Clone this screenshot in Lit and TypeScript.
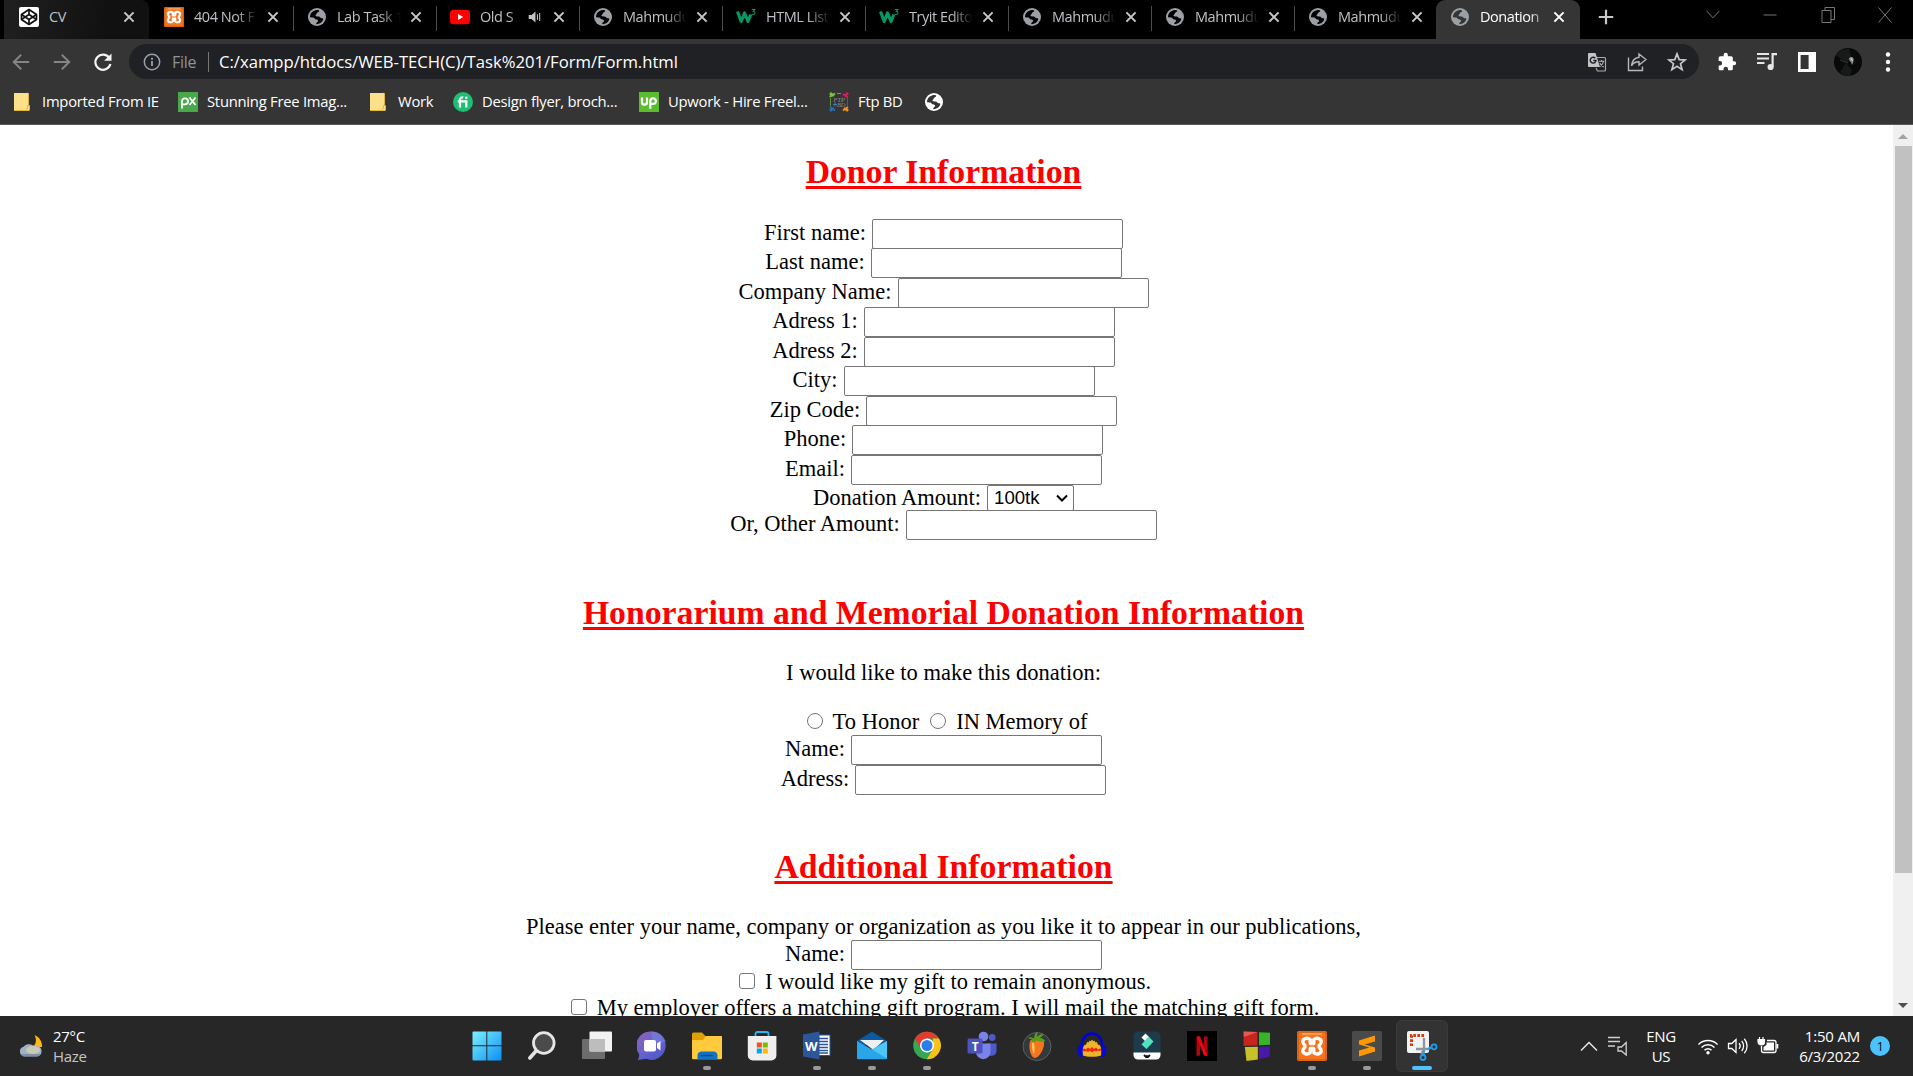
import { LitElement, html, svg, css } from "lit";
import { customElement, property } from "lit/decorators.js";

const globe = (c: string, bg: string) => svg`
  <circle cx="10" cy="10" r="9" fill=${c}/>
  <path d="M3 10.2C3 7 5 4 8.6 3.2c1.600-.4 3.400-.2 3.600.6.2 1-.8 1.200-1.700 1.700-.9.500-.6 1.500-1.400 2.100-.7.600-1 1.400.2 1.700 1.500.3 3.100-.1 3.900 1.100.9 1.300 2.300.4 2.900 1.200.7 1-1 3.400-2.600 4.400-1.300.9-3 1.300-4.300 1.100 0-1.300.9-2 1.700-2.700.7-.8-.2-1.700-1.300-1.900C7.500 12.200 7.600 10.500 6 10.400z" fill=${bg}/>`;

const xampp = svg`
  <rect width="30" height="30" rx="2" fill="#f4731c"/>
  <rect x="1" y="1" width="28" height="28" rx="2" fill="none" stroke="#c95a10" stroke-width="1.200"/>
  <rect x="5" y="2" width="20" height="1.800" rx=".9" fill="#fba766"/>
  <path d="M13.200 8.500C10 5.800 5 8 6 11.500c.4 1.800 2 2.200 2 3.700s-1.600 2-2 3.700c-1 3.500 4 5.500 7.200 2.800v-4.200h3.600v4.200c3.200 2.700 8.200.7 7.200-2.800-.4-1.700-2-2.200-2-3.700s1.600-1.900 2-3.700c1-3.500-4-5.700-7.200-3v4.200h-3.600z" fill="none" stroke="#fff" stroke-width="3.300" stroke-linejoin="round"/>`;

const icons: Record<string, [string, unknown]> = {
  globe: ["0 0 20 20", globe("#9aa0a6", "#000")],
  globeActive: ["0 0 20 20", globe("#9aa0a6", "#353535")],
  globeWhite: ["0 0 20 20", globe("#fff", "#353535")],
  xampp: ["0 0 30 30", xampp],
  codepen: ["0 0 20 20", svg`
    <rect width="20" height="20" rx="2" fill="#fff"/>
    <g fill="none" stroke="#111" stroke-width="1.700" stroke-linejoin="round">
      <path d="M10 2.500l7.500 5v5L10 17.500l-7.500-5v-5z"/>
      <path d="M2.500 7.500L10 12.500l7.500-5M2.500 12.500L10 7.500l7.500 5M10 2.500v5M10 12.500v5"/>
    </g>`],
  youtube: ["0 0 20 20", svg`<rect y="2.800" width="20" height="14.400" rx="3.500" fill="#f00"/><path d="M8 7l5.200 3L8 13z" fill="#fff"/>`],
  w3: ["0 0 20 20", svg`
    <path d="M1.500 4.500l3.700 10 3.300-8.500 3.500 8.500 2.800-7" fill="none" stroke="#059862" stroke-width="3.200" stroke-linejoin="round"/>
    <path d="M15.800 2.500h3L17.300 4.500c2.200 0 2.200 3-.2 3-.7 0-1.200-.3-1.500-.8" fill="none" stroke="#059862" stroke-width="1.100"/>`],
  close: ["0 0 20 20", svg`<path d="M5.400 5.400l9.200 9.200M14.600 5.400l-9.200 9.200" stroke="currentColor" stroke-width="2" fill="none"/>`],
  audio: ["0 0 20 20", svg`<path d="M3 7.800h3.200L10.500 4v12l-4.300-3.800H3z" fill="#c4c4c4"/><path d="M12.700 7v6M15.200 5.500v9" stroke="#c4c4c4" stroke-width="1.200"/>`],
  plus: ["0 0 20 20", svg`<path d="M10 2.800v14.400M2.800 10h14.400" stroke="#c8c8c8" stroke-width="2.200"/>`],
  down: ["0 0 20 20", svg`<path d="M3.500 5.800L10 12.800l6.500-7" stroke="#777" fill="none"/>`],
  min: ["0 0 20 20", svg`<path d="M3.500 10h13" stroke="#777"/>`],
  restore: ["0 0 20 20", svg`<path d="M4 5.500h9v12H4zM7 5.500V2.500h9.500V14.500H13" stroke="#777" fill="none"/>`],
  x: ["0 0 20 20", svg`<path d="M3.500 2.500l13 15M16.500 2.500l-13 15" stroke="#777" fill="none"/>`],
  back: ["0 0 20 20", svg`<path d="M18.200 10H3M10.200 2.700L2.700 10l7.500 7.300" stroke="#858585" stroke-width="1.900" fill="none"/>`],
  forward: ["0 0 20 20", svg`<path d="M1.800 10H17M9.800 2.700L17.300 10l-7.500 7.300" stroke="#858585" stroke-width="1.900" fill="none"/>`],
  reload: ["0 0 20 20", svg`<path d="M16.200 5.800A7.600 7.600 0 1 0 17.400 12" stroke="#f4f4f4" stroke-width="2.200" fill="none"/><path d="M18.500 1.500v7.300h-7.300z" fill="#f4f4f4"/>`],
  info: ["0 0 20 20", svg`<circle cx="10" cy="10" r="7.700" fill="none" stroke="#9aa0a6" stroke-width="1.500"/><path d="M10 9v5M10 5.800v1.900" stroke="#9aa0a6" stroke-width="1.800"/>`],
  translate: ["0 0 20 20", svg`
    <path d="M9 5.500h8.500a1 1 0 0 1 1 1V18a1 1 0 0 1-1 1h-7L9 16" fill="none" stroke="#a9a9a9" stroke-width="1.200"/>
    <path d="M2 1h6.500l4.500 14H2a1 1 0 0 1-1-1V2a1 1 0 0 1 1-1z" fill="#c4c4c4"/>
    <path d="M8.300 6.300A2.900 2.900 0 1 0 9 8.500H6.300" fill="none" stroke="#202124" stroke-width="1.400"/>
    <path d="M11.800 9.300h5.500M14.500 8v1.300M16.500 9.500c-.5 2.500-2 4-3.500 5M12.800 11c1 2 2.200 3.200 4 4" fill="none" stroke="#b5b5b5" stroke-width="1.100"/>`],
  share: ["0 0 20 20", svg`<path d="M1.500 5.500v13h14v-4M12 2l7 5.500-7 5.500V9.800c-3.500 0-6 1.200-7.500 4C5 9 7.500 6 12 5.300z" fill="none" stroke="#b8b8b8" stroke-width="1.400"/>`],
  star: ["0 0 20 20", svg`<path d="M10 1.800l2.200 5.800 6 .3-4.700 3.800 1.600 5.900L10 14.300l-5.100 3.300 1.600-5.900L1.800 7.900l6-.3z" fill="none" stroke="#c8c8c8" stroke-width="1.700"/>`],
  puzzle: ["0 0 24 24", svg`<path d="M20.500 11H19V7c0-1.100-.9-2-2-2h-4V3.500a2.500 2.500 0 0 0-5 0V5H4c-1.100 0-2 .9-2 2v3.800h1.500a2.700 2.700 0 0 1 0 5.400H2V20c0 1.100.9 2 2 2h3.800v-1.500a2.700 2.700 0 0 1 5.400 0V22H17c1.100 0 2-.9 2-2v-4h1.500a2.500 2.500 0 0 0 0-5z" fill="#fff"/>`],
  media: ["0 0 20 20", svg`<path d="M0 2h12M0 6.500h12M0 11h7.500" stroke="#e6e6e6" stroke-width="2"/><path d="M15.600 14.500V2.200H20" stroke="#e6e6e6" stroke-width="2.200" fill="none"/><circle cx="13.600" cy="15" r="3.100" fill="#e6e6e6"/>`],
  panel: ["0 0 20 20", svg`<path d="M1 0h18v20H1zM3.600 3v14h8V3z" fill="#fff" fill-rule="evenodd"/>`],
  dots: ["0 0 20 20", svg`<circle cx="10" cy="2.500" r="2.200" fill="#fff"/><circle cx="10" cy="10" r="2.200" fill="#fff"/><circle cx="10" cy="17.500" r="2.200" fill="#fff"/>`],
  avatar: ["0 0 28 28", svg`<circle cx="14" cy="14" r="14" fill="#080909"/><path d="M2 7l10 8 6-4-3-10A14 14 0 0 0 2 7zM12 15l-6 9a14 14 0 0 0 10 4l2-6z" fill="#171a19"/><path d="M6 12l8 3" stroke="#333" /><path d="M15 10.500c1-2 4-2 4.500 0s-.5 4.500-1.500 6.500l-1-3c-1-.5-2-2-2-3.500z" fill="#8d8d8d"/><path d="M17 10.500l1.500 2" stroke="#eee"/>`],
  folder: ["0 0 20 20", svg`<path d="M1 1h13.500a1 1 0 0 1 1 1v10.500l1 1V18a1 1 0 0 1-1 1H1z" fill="#ffe08a"/><path d="M15.500 12.500V2a1 1 0 0 0-1-1M1 18.500h14.500a1 1 0 0 0 1-1v-4h-2v2.500l-1 1.500" fill="none" stroke="#e2b93f" stroke-width="1"/>`],
  px: ["0 0 20 20", svg`<rect width="20" height="20" fill="#4aa84a"/><path d="M4 16.500V9a3 3 0 1 1 3 3.300H5M11.500 5.500l6 7.500M17.500 5.500l-6 7.500" stroke="#fff" stroke-width="1.800" fill="none"/>`],
  fiverr: ["0 0 20 20", svg`<circle cx="10" cy="10" r="10" fill="#1dbf73"/><path d="M7 15.500V7.800c0-1.800 1.200-2.500 3.200-2.300M4.800 9.300h8.500v6.200" stroke="#fff" stroke-width="2.200" fill="none"/><circle cx="13.300" cy="5.800" r="1.300" fill="#fff"/>`],
  upwork: ["0 0 20 20", svg`<rect width="20" height="20" fill="#5bbc2f"/><path d="M3 5.500v4.700c0 3.300 5 3.300 5 0V5.500M11.300 16.800V8.700a2.800 2.800 0 1 1 2.800 3.200h-2" stroke="#fff" stroke-width="2.200" fill="none"/>`],
  ftp: ["0 0 20 20", svg`
    <path d="M1 5c1-2 3-2 5-3.500M1 1.500L5 4" stroke="#7cc242" stroke-width="2" fill="none"/><circle cx="2" cy="1.800" r="1.500" fill="#7cc242"/>
    <path d="M14 2l5 3.500M15 4l4-2.500" stroke="#d81b60" stroke-width="2"/><circle cx="18" cy="1.800" r="1.500" fill="#d81b60"/>
    <path d="M1 15l5 3.500M5 16l-4 2.500" stroke="#1e73be" stroke-width="2"/><circle cx="2" cy="18" r="1.500" fill="#1e73be"/>
    <path d="M19 15l-5 3.500M15 16l4 2.500" stroke="#f7941d" stroke-width="2"/><circle cx="18" cy="18" r="1.500" fill="#f7941d"/>
    <path d="M1.500 6v8" stroke="#5c8f3b"/><path d="M18.500 6v8" stroke="#b0305c"/><path d="M8 1.500h4" stroke="#888"/>
    <text x="10" y="9.600" font-size="7" font-style="italic" font-family="Liberation Serif, serif" fill="#888" text-anchor="middle">FTP</text>
    <text x="12" y="15.400" font-size="6.500" font-style="italic" font-family="Liberation Serif, serif" fill="#888" text-anchor="middle">BD</text>
    <path d="M4 12.500h4M6 10.500v4" stroke="#3a7fc0"/>`],
  weather: ["0 0 24 22", svg`
    <path d="M15.500 0c5 2 8 7 7.500 12h-9c3-3 4-7 1.500-12z" fill="#fdb913"/>
    <path d="M5 21.500a5 5 0 0 1-.5-9.700A7 7 0 0 1 14 10.500a5 5 0 0 1 4 .5 5.300 5.300 0 0 1 0 10.500z" fill="#9fb1c6"/>
    <ellipse cx="14" cy="15" rx="7" ry="4" fill="#d5cfae" opacity=".8"/><path d="M1.500 19a5 5 0 0 0 3.500 2.500h13a5 5 0 0 0 4-2.500z" fill="#74889f" opacity=".8"/>`],
  start: ["0 0 30 30", svg`<defs><linearGradient id="g" x1="0" y1="0" x2="30" y2="30" gradientUnits="userSpaceOnUse"><stop stop-color="#7df3ff"/><stop offset="1" stop-color="#0a8df5"/></linearGradient></defs><path d="M.5 1.500a1 1 0 0 1 1-1H14.300V14.300H.5zM15.300.5h13.200a1 1 0 0 1 1 1v12.800H15.300zM.5 15.300h13.800v14.200H1.500a1 1 0 0 1-1-1zM15.300 15.300h14.200v13.200a1 1 0 0 1-1 1H15.300z" fill="url(#g)"/>`],
  search: ["0 0 30 30", svg`<path d="M9.500 19.500L2.800 27" stroke="#dfe3e6" stroke-width="3.600" stroke-linecap="round"/><circle cx="16.800" cy="12" r="10.300" fill="#4b4b4b" stroke="#e6e6e6" stroke-width="2.800"/>`],
  tasks: ["0 0 30 30", svg`<rect x="0" y="8" width="23" height="20" rx="1" fill="#6d6d6d"/><rect x="7.500" y=".5" width="22.500" height="20" rx="1" fill="#f2f2f2"/><path d="M7.500 8H23v12.500H8.500a1 1 0 0 1-1-1z" fill="#bdbdbd"/>`],
  chat: ["0 0 30 30", svg`<defs><linearGradient id="g" x1="5" y1="0" x2="25" y2="25" gradientUnits="userSpaceOnUse"><stop stop-color="#8b62b5"/><stop offset=".5" stop-color="#6a63cf"/><stop offset="1" stop-color="#5059c9"/></linearGradient></defs><path d="M15 .5a14.200 14.200 0 1 1-6 27.300L.8 29c.9-2 1.700-4 1.300-6A14.200 14.200 0 0 1 15 .5z" fill="url(#g)"/><path d="M14 .6a14.300 14.300 0 0 1 15 10L16 14z" fill="#7a8fe6" opacity=".45"/><rect x="7" y="9" width="12" height="11.500" rx="2" fill="#fff"/><path d="M20 12.500l3.500-2.500v9.500L20 17z" fill="#fff"/>`],
  explorer: ["0 0 30 30", svg`<path d="M0 3a1.500 1.500 0 0 1 1.500-1.500H10L13.500 5H30v8H0z" fill="#e0a100"/><path d="M0 9h11l3-4h14.500A1.500 1.500 0 0 1 30 6.500V27a1.200 1.200 0 0 1-1.200 1.200H1.200A1.200 1.200 0 0 1 0 27z" fill="#ffcb3d"/><path d="M5.500 28.200V24a4 4 0 0 1 4-3.500h12a4 4 0 0 1 4 3.500v4.200z" fill="#1173c4"/><path d="M8.500 24.500h13" stroke="#0b4f90" stroke-width="1.500"/>`],
  store: ["0 0 30 30", svg`<path d="M8.500 7V2.800A1.800 1.800 0 0 1 10.300 1h9.400a1.800 1.800 0 0 1 1.800 1.800V7" fill="none" stroke="#2db4f2" stroke-width="1.800"/><path d="M.8 5h28.600v19.500a5 5 0 0 1-5 5H5.800a5 5 0 0 1-5-5z" fill="#efefef"/><path d="M9.800 11.500h5v5h-5z" fill="#f25022"/><path d="M15.800 11.500h5v5h-5z" fill="#7fba00"/><path d="M9.800 17.500h5v5h-5z" fill="#00a4ef"/><path d="M15.800 17.500h5v5h-5z" fill="#ffb900"/>`],
  word: ["0 0 30 30", svg`<rect x="15" y="4" width="13" height="20.500" fill="#fff" stroke="#2b579a"/><path d="M17 7.500h9M17 10.500h9M17 13.500h9M17 16.500h9M17 19.500h9M17 22h9" stroke="#2b579a" stroke-width="1.300"/><path d="M1 3.500L17.500.5v28L1 25.500z" fill="#2b579a"/><text x="9.200" y="19.500" text-anchor="middle" font-family="Open Sans, sans-serif" font-weight="700" font-size="13" fill="#fff">W</text>`],
  mail: ["0 0 30 30", svg`<path d="M0 10L13.500 1.500a3 3 0 0 1 3 0L30 10v4H0z" fill="#0c59a4"/><path d="M3 9h24L16.500 19z" fill="#f0f0f0"/><path d="M0 10l15 8.500L30 10v17a1.200 1.200 0 0 1-1.200 1.200H1.200A1.200 1.200 0 0 1 0 27z" fill="#2aa5ea"/><path d="M15 18.500L30 10v17.500z" fill="#4cc8f7"/>`],
  chrome: ["0 0 30 30", svg`<circle cx="15" cy="14.500" r="13.800" fill="#34a853"/><path d="M15 .7a13.800 13.800 0 0 1 12 6.900H15L9 18 3 7.700A13.800 13.800 0 0 1 15 .7z" fill="#e33b2e"/><path d="M27 7.600a13.800 13.800 0 0 1-12.200 20.700L21 18l0-10.400z" fill="#fbc116"/><circle cx="15" cy="14.500" r="7" fill="#fff"/><circle cx="15" cy="14.500" r="5.500" fill="#2b7de9"/>`],
  teams: ["0 0 30 30", svg`<circle cx="25.200" cy="6.500" r="3.400" fill="#5059c9"/><path d="M20 12.500h9.500V20a5 5 0 0 1-8.500 3.500z" fill="#5059c9"/><circle cx="16.500" cy="5.500" r="4.800" fill="#7b83eb"/><path d="M9 12.500h14.500v8.500a7.200 7.200 0 0 1-14.500 0z" fill="#7b83eb"/><rect x=".5" y="7.500" width="15" height="15" rx="1.500" fill="#4b53bc"/><text x="8" y="19.500" text-anchor="middle" font-family="Open Sans, sans-serif" font-weight="700" font-size="12" fill="#fff">T</text>`],
  fl: ["0 0 30 30", svg`<circle cx="15" cy="15.500" r="14" fill="#33393d" stroke="#596167"/><path d="M8.500 9.500c3-3 9.500-3 13 0 2.500 5-3.500 17-8.500 17.500-5 0-7-13-4.500-17.500z" fill="#f5761a"/><path d="M11 10c-2 4-1 10 1 13 1-4 1-9-1-13z" fill="#ffc46b"/><path d="M6 7c3-1.500 5 0 6 1 0-3 1-6 3.500-7 0 2 0 3-1 5 2-2 4-3 7-3-1 2-2 3-4 4 3-.5 4 1 6 3-4 1-7 1-9-.5-2 2-4 2.500-5.500 1.500 1-1 1-2 1-3-1.500 0-3-.5-4-1z" fill="#5e9a1f"/>`],
  audacity: ["0 0 30 30", svg`<path d="M5 20V13a10 10.500 0 0 1 20 0v7" fill="none" stroke="#0000d8" stroke-width="2.400"/><path d="M6 24.500c-1-3-.5-7 .5-9l1.500-2 1 .500 1-3 1.500.500 1-2 1 .800 1.500-1.500 1.500 1.500 1-.800 1 2 1.500-.500 1 3 1-.500 1.500 2c1 2 1.500 6 .5 9-4 1.800-14 1.800-18 0z" fill="#f0b429"/><path d="M5 18.500l2-1 2 1 2-2 2 1.500 2-2 2 2 2-1.500 2 2 2-1 2 1-2 1.500-2-.500-2 1-2-1-2 2-2-2-2 1.500-2-1-2 .500z" fill="#f2220c"/><path d="M5.500 12v14.500C2 26 .5 23 .5 19.500S2 13 5.500 12zM24.500 12v14.500c3.500-.5 5-3.500 5-7S28 13 24.500 12z" fill="#0808d0"/>`],
  filmora: ["0 0 30 30", svg`<rect x="1.500" y=".5" width="27" height="28" rx="4.500" fill="#1d3b4c"/><path d="M1.500 21.500h27v2.500a4.500 4.500 0 0 1-4.500 4.500H6A4.500 4.500 0 0 1 1.500 24z" fill="#fff"/><path d="M13.500 2.500l4 4-4 4-4-4z" fill="#fff"/><path d="M16.500 5.500l5 5-7 7.500-5-4.500z" fill="#4fe3c1"/><path d="M12 24l2 2 1-1 1 1 2-2" stroke="#111" stroke-width="1.800" fill="none"/>`],
  netflix: ["0 0 30 30", svg`<rect width="30" height="30" fill="#000"/><path d="M9.500 5.500h3.500v19l-3.500.5zM17 5.500h3.500v19.500L17 24.500z" fill="#b1060f"/><path d="M9.500 5.500H13l7.500 19.500-3.500-.5z" fill="#e50914"/>`],
  blocks: ["0 0 30 30", svg`<path d="M1.500.5L15.500 1v13.500l-14 .3z" fill="#c9251c"/><path d="M17 1.200l11 .5v12l-11 .6z" fill="#36b52b"/><path d="M2.800 16l13-.3v12.800L4.500 30z" fill="#c9c02a"/><path d="M17 15.700l11-.5-.5 10.500L17 28z" fill="#4a17a8"/><path d="M1.500.5L15.500 1 2 6z" fill="#ef7268" opacity=".7"/>`],
  sublime: ["0 0 30 30", svg`<rect width="30" height="30" rx="1.500" fill="#4a4a4a"/><path d="M7 9.500L23 4.500v6L12.500 13.500 23 16.500v4L7 25.500v-6l10.500-3L7 13.500z" fill="#ff9800"/>`],
  snip: ["0 0 32 32", svg`<rect x="1" y="1" width="22" height="22" rx="2" fill="#f1f3f4"/><path d="M5.500 16V5.500H19" fill="none" stroke="#d83b01" stroke-width="3" stroke-dasharray="2.600 1.500"/><path d="M18 8v12l-3 4M10 19h12l4-2" stroke="#8f979c" stroke-width="2.300" fill="none"/><circle cx="17" cy="27.500" r="2.500" fill="none" stroke="#1e9be9" stroke-width="1.800"/><circle cx="28" cy="16.800" r="2.500" fill="none" stroke="#1e9be9" stroke-width="1.800"/><path d="M18 20.500v4.500M21.500 19l4-1.500" stroke="#1e9be9" stroke-width="1.800"/>`],
  up: ["0 0 20 20", svg`<path d="M2 14.500l8-8 8 8" stroke="#eee" stroke-width="1.400" fill="none"/>`],
  playlist: ["0 0 22 20", svg`<path d="M1 1.500h12M1 5.500h12M1 10h7" stroke="#d0d0d0" stroke-width="1.500"/><path d="M11 11h3.500l4.700-4.500v12.500l-4.700-4H11z" stroke="#d0d0d0" stroke-width="1.300" fill="none"/>`],
  wifi: ["0 0 22 20", svg`<path d="M1.500 8.500a13.500 13.500 0 0 1 19 0M4.500 11.500a9.300 9.300 0 0 1 13 0M7.500 14.300a5 5 0 0 1 7 0" stroke="#fff" stroke-width="1.500" fill="none"/><circle cx="11" cy="16.800" r="1.700" fill="#fff"/>`],
  volume: ["0 0 22 20", svg`<path d="M1.500 7.500h3.300l4.200-4v13l-4.200-4H1.500z" stroke="#fff" stroke-width="1.300" fill="none"/><path d="M12 7.300a4 4 0 0 1 0 5.400M14.700 5a7.500 7.500 0 0 1 0 10M17.300 2.700a11 11 0 0 1 0 14.600" stroke="#fff" stroke-width="1.300" fill="none"/>`],
  battery: ["0 0 22 20", svg`<path d="M4.500 10v4.500a2 2 0 0 0 2 2h10.500a2 2 0 0 0 2-2V6.500a2 2 0 0 0-2-2h-7" stroke="#fff" stroke-width="1.300" fill="none"/><path d="M9.500 6.500H17v8H6.500V11l3-2z" fill="#fff"/><path d="M19.500 8h1.800v4.500h-1.800z" fill="#fff"/><path d="M1 3.500h6.500v2.200a3.200 3.200 0 0 1-6.500 0zM2.500 1v3M6 1v3" fill="#fff" stroke="#fff" stroke-width="1.200"/>`],
};

@customElement("ui-icon")
class UiIcon extends LitElement {
  @property() name = "";
  static styles = css`
    :host { display: block; flex: none; width: 20px; height: 20px; }
    .glyph { display: block; width: 100%; height: 100%; }
  `;
  render() {
    const [box, shape] = icons[this.name];
    return html`<svg class="glyph" viewBox=${box}>${shape}</svg>`;
  }
}

interface Tab { icon: string; title: string; kind?: string; audio?: boolean; }

const tabs: Tab[] = [
  { icon: "codepen", title: "CV", kind: "shaded" },
  { icon: "xampp", title: "404 Not F" },
  { icon: "globe", title: "Lab Task 1" },
  { icon: "youtube", title: "Old S", audio: true },
  { icon: "globe", title: "Mahmudu" },
  { icon: "w3", title: "HTML List" },
  { icon: "w3", title: "Tryit Edito" },
  { icon: "globe", title: "Mahmudu" },
  { icon: "globe", title: "Mahmudu" },
  { icon: "globe", title: "Mahmudu" },
  { icon: "globeActive", title: "Donation", kind: "active" },
];

const bookmarks: [string, string, number][] = [
  ["folder", "Imported From IE", 165],
  ["px", "Stunning Free Imag...", 191],
  ["folder", "Work", 84],
  ["fiverr", "Design flyer, broch...", 186],
  ["upwork", "Upwork - Hire Freel...", 190],
  ["ftp", "Ftp BD", 95],
  ["globeWhite", "", 20],
];

@customElement("browser-chrome")
class BrowserChrome extends LitElement {
  static styles = css`
    :host { display: block; font-family: "Open Sans", "Noto Sans", sans-serif; letter-spacing: -0.250px; }
    .strip { display: flex; height: 39px; background: #000; padding-left: 4px; }
    .tab { display: flex; align-items: center; width: 143px; box-sizing: border-box; padding: 0 9px 5px 15px; color: #bdc1c6; font-size: 14.500px; letter-spacing: -0.450px; position: relative; }
    .tab:not(.shaded):not(.active)::after { content: ""; position: absolute; right: -2px; top: 6px; width: 1px; height: 25px; background: #4d4d4d; }
    .tab.last::after { display: none; }
    .shaded { width: 145px; padding-right: 10px; background: linear-gradient(100deg, #202020, #111 70%); border-radius: 0 8px 0 0; }
    .active { width: 144px; background: #353535; color: #fff; border-radius: 9px 9px 0 0; padding-left: 14px; padding-right: 11px; }
    .title { flex: 1; min-width: 0; margin-left: 10px; white-space: nowrap; line-height: 22px; mask-image: linear-gradient(90deg, #000 66%, transparent 100%); }
    .active .title { mask-image: linear-gradient(90deg, #000 75%, transparent 112%); }
    .shaded .title { mask-image: none; }
    .close { color: #c8c8c8; margin-left: 5px; }
    .active .close { color: #fff; }
    .audio { width: 18px; height: 18px; margin-left: 2px; }
    .strip-end { display: flex; flex: 1; align-items: center; padding: 0 18px 5px 16px; }
    .grow { flex: 1; }
    .controls { display: flex; gap: 37.300px; margin-top: -4px; }
    .bar { display: flex; align-items: center; height: 46px; background: #353535; padding: 0 15px 0 11px; }
    .nav { display: flex; gap: 21px; width: 118px; box-sizing: border-box; }
    .omni { display: flex; align-items: center; width: 1570px; height: 35px; border-radius: 18px; background: #202124; padding: 0 12px 0 13px; box-sizing: border-box; font-size: 16px; margin-top: -1px; }
    .file { color: #8f9398; margin-left: 10px; width: 36px; }
    .rule { width: 1px; height: 20px; background: #777; margin-right: 10px; }
    .url { flex: 1; color: #fff; white-space: nowrap; font-size: 16.700px; letter-spacing: -0.020px; }
    .omni-actions { display: flex; gap: 20px; }
    .tools { display: flex; align-items: center; gap: 20px; margin-left: 18px; flex: 1; }
    .avatar { width: 28px; height: 28px; margin: 0 -4px 0 -3px; }
    .marks { display: flex; align-items: center; height: 39px; background: #353535; border-bottom: 1px solid #5a5a5a; padding: 0 0 0 13px; color: #fff; font-size: 14.800px; }
    .mark { display: flex; align-items: center; gap: 9px; padding-bottom: 6px; height: 28px; white-space: nowrap; }
    .caption { margin-top: -2px; }
  `;
  render() {
    return html`
      <div class="strip">
        ${tabs.map((t, i) => html`
          <div class="tab ${t.kind ?? ""} ${i === 9 ? "last" : ""}">
            <ui-icon name=${t.icon}></ui-icon>
            <span class="title">${t.title}</span>
            ${t.audio ? html`<ui-icon class="audio" name="audio"></ui-icon>` : ""}
            <ui-icon class="close" name="close"></ui-icon>
          </div>`)}
        <div class="strip-end">
          <ui-icon name="plus"></ui-icon>
          <span class="grow"></span>
          <div class="controls">${["down", "min", "restore", "x"].map((n) => html`<ui-icon name=${n}></ui-icon>`)}</div>
        </div>
      </div>
      <div class="bar">
        <div class="nav">${["back", "forward", "reload"].map((n) => html`<ui-icon name=${n}></ui-icon>`)}</div>
        <div class="omni">
          <ui-icon name="info"></ui-icon>
          <span class="file">File</span><span class="rule"></span>
          <span class="url">C:/xampp/htdocs/WEB-TECH(C)/Task%201/Form/Form.html</span>
          <div class="omni-actions">${["translate", "share", "star"].map((n) => html`<ui-icon name=${n}></ui-icon>`)}</div>
        </div>
        <div class="tools">
          ${["puzzle", "media", "panel"].map((n) => html`<ui-icon name=${n}></ui-icon>`)}
          <ui-icon class="avatar" name="avatar"></ui-icon>
          <ui-icon name="dots"></ui-icon>
        </div>
      </div>
      <div class="marks">
        ${bookmarks.map(([icon, label, w]) => html`<div class="mark" style="width:${w}px"><ui-icon name=${icon}></ui-icon><span class="caption">${label}</span></div>`)}
      </div>`;
  }
}

@customElement("donation-form")
class DonationForm extends LitElement {
  static styles = css`
    :host { display: block; flex: 1; min-width: 0; overflow: hidden; background: #fff; color: #000; font: 22.500px/26px "Liberation Serif", "Times New Roman", serif; }
    .sheet { width: 1887px; display: flex; flex-direction: column; align-items: center; }
    .title { margin: 0; font-size: 33.730px; line-height: 38px; font-weight: 700; color: #f00; text-decoration: underline; text-decoration-thickness: 3px; text-underline-offset: 3px; text-decoration-skip-ink: none; }
    .donor { padding: 28px 0; }
    .honor { padding: 54px 0 28px; }
    .extra { padding: 53px 0 28px; }
    .field { display: flex; align-items: center; height: 29.500px; white-space: nowrap; }
    .label { padding-bottom: 2px; margin-right: 6px; }
    .box { width: 251px; height: 30px; box-sizing: border-box; border: 1px solid #767676; border-radius: 2px; background: #fff; margin: 0; padding: 0; }
    .pick { height: 26px; }
    .pick .label { padding-bottom: 0; }
    .select { display: flex; align-items: center; justify-content: space-between; width: 87px; height: 26px; box-sizing: border-box; border: 1px solid #767676; border-radius: 2px; padding: 0 5px 0 6px; font: 18.600px/24px "Liberation Sans", Arial, sans-serif; }
    .arrow { width: 12px; height: 8px; }
    .line { height: 26.500px; white-space: nowrap; }
    .options { display: flex; align-items: center; height: 26px; margin: 22px 0 1px 7px; }
    .check { display: flex; align-items: center; height: 26px; padding-left: 3px; margin-top: -1px; margin-bottom: 1px; white-space: nowrap; }
    .radio, .tick { width: 16px; height: 16px; box-sizing: border-box; border: 1px solid #767676; margin: 0 10px 2px 0; }
    .radio { border-radius: 50%; }
    .tick { border-radius: 3px; }
    .gap { margin-right: 11px; }
  `;
  private field(label: string) {
    return html`<label class="field"><span class="label">${label}</span><input class="box" type="text"></label>`;
  }
  render() {
    return html`<div class="sheet">
      <h2 class="title donor">Donor Information</h2>
      ${["First name:", "Last name:", "Company Name:", "Adress 1:", "Adress 2:", "City:", "Zip Code:", "Phone:", "Email:"].map((l) => this.field(l))}
      <div class="field pick"><span class="label">Donation Amount:</span><span class="select">100tk
        <svg class="arrow" viewBox="0 0 12 8"><path d="M1 1.500l5 5 5-5" fill="none" stroke="#000" stroke-width="2"/></svg></span></div>
      ${this.field("Or, Other Amount:")}
      <h2 class="title honor">Honorarium and Memorial Donation Information</h2>
      <div class="line">I would like to make this donation:</div>
      <div class="options"><span class="radio"></span><span class="gap">To Honor</span><span class="radio"></span><span>IN Memory of</span></div>
      ${this.field("Name:")}
      ${this.field("Adress:")}
      <h2 class="title extra">Additional Information</h2>
      <div class="line">Please enter your name, company or organization as you like it to appear in our publications,</div>
      ${this.field("Name:")}
      <div class="check"><span class="tick"></span>I would like my gift to remain anonymous.</div>
      <div class="check"><span class="tick"></span>My employer offers a matching gift program. I will mail the matching gift form.</div>
    </div>`;
  }
}

const apps: [string, string][] = [
  ["start", ""], ["search", ""], ["tasks", ""], ["chat", ""], ["explorer", "open"], ["store", ""], ["word", "open"],
  ["mail", "open"], ["chrome", "open"], ["teams", ""], ["fl", ""], ["audacity", ""], ["filmora", ""], ["netflix", ""],
  ["blocks", ""], ["xampp", "open"], ["sublime", "open"], ["snip", "current"],
];

@customElement("task-bar")
class TaskBar extends LitElement {
  static styles = css`
    :host { display: flex; height: 60px; background: #272727; color: #fff; font: 15px/20px "Open Sans", "Noto Sans", sans-serif; letter-spacing: -0.300px; }
    .weather { display: flex; align-items: center; width: 459px; box-sizing: border-box; padding-left: 19px; gap: 10px; }
    .cloud { width: 24px; height: 22px; }
    .haze { color: #c4c4c4; }
    .apps { display: flex; }
    .app { position: relative; width: 55px; height: 60px; display: flex; justify-content: center; align-items: center; }
    .app ui-icon { width: 30px; height: 30px; }
    .app.current ui-icon { width: 32px; height: 32px; }
    .current { width: 50px; height: 50px; margin: 5px 3px; background: #333; border-radius: 5px; box-shadow: 0 0 0 1px #3b3b3b; box-sizing: border-box; }
    .open::after, .current::after { content: ""; position: absolute; bottom: 6px; width: 8px; height: 4px; border-radius: 2px; background: #9a9a9a; }
    .current::after { bottom: 1px; width: 20px; background: #4cc2ff; }
    .tray { margin-left: auto; display: flex; align-items: center; padding-right: 23px; }
    .chev { width: 20px; height: 20px; margin-right: 8px; }
    .wide { width: 22px; }
    .lang { width: 40px; text-align: center; margin: 0 16px 0 12px; line-height: 20px; }
    .status { display: flex; gap: 8px; }
    .clock { width: 81px; text-align: right; margin-right: 10px; line-height: 20px; white-space: nowrap; letter-spacing: -0.200px; }
    .badge { width: 20px; height: 20px; border-radius: 50%; background: #4cc2ff; color: #111; text-align: center; font-size: 13px; line-height: 20px; }
  `;
  render() {
    return html`
      <div class="weather"><ui-icon class="cloud" name="weather"></ui-icon><div><div>27°C</div><div class="haze">Haze</div></div></div>
      <div class="apps">${apps.map(([n, s]) => html`<div class="app ${s}"><ui-icon name=${n}></ui-icon></div>`)}</div>
      <div class="tray">
        <ui-icon class="chev" name="up"></ui-icon>
        <ui-icon class="wide" name="playlist"></ui-icon>
        <div class="lang">ENG<br>US</div>
        <div class="status">${["wifi", "volume", "battery"].map((n) => html`<ui-icon class="wide" name=${n}></ui-icon>`)}</div>
        <div class="clock">1:50 AM<br>6/3/2022</div>
        <div class="badge">1</div>
      </div>`;
  }
}

@customElement("app-root")
class AppRoot extends LitElement {
  static styles = css`
    :host { display: flex; flex-direction: column; width: 1913px; height: 1076px; overflow: hidden; }
    .view { display: flex; flex: 1; min-height: 0; }
    .scroll { display: flex; flex-direction: column; align-items: center; width: 20px; background: #f0f0f0; }
    .arrow { width: 10px; height: 6px; flex: none; margin: 8px 0 7px; }
    .thumb { width: 17px; height: 727px; background: #c1c1c1; margin-left: 1px; }
    .fill { flex: 1; }
  `;
  render() {
    return html`
      <browser-chrome></browser-chrome>
      <div class="view">
        <donation-form></donation-form>
        <div class="scroll">
          <svg class="arrow" viewBox="0 0 10 6"><path d="M0 6l5-5 5 5z" fill="#a3a3a3"/></svg>
          <div class="thumb"></div><div class="fill"></div>
          <svg class="arrow" viewBox="0 0 10 6"><path d="M0 0h10L5 5z" fill="#505050"/></svg>
        </div>
      </div>
      <task-bar></task-bar>`;
  }
}
